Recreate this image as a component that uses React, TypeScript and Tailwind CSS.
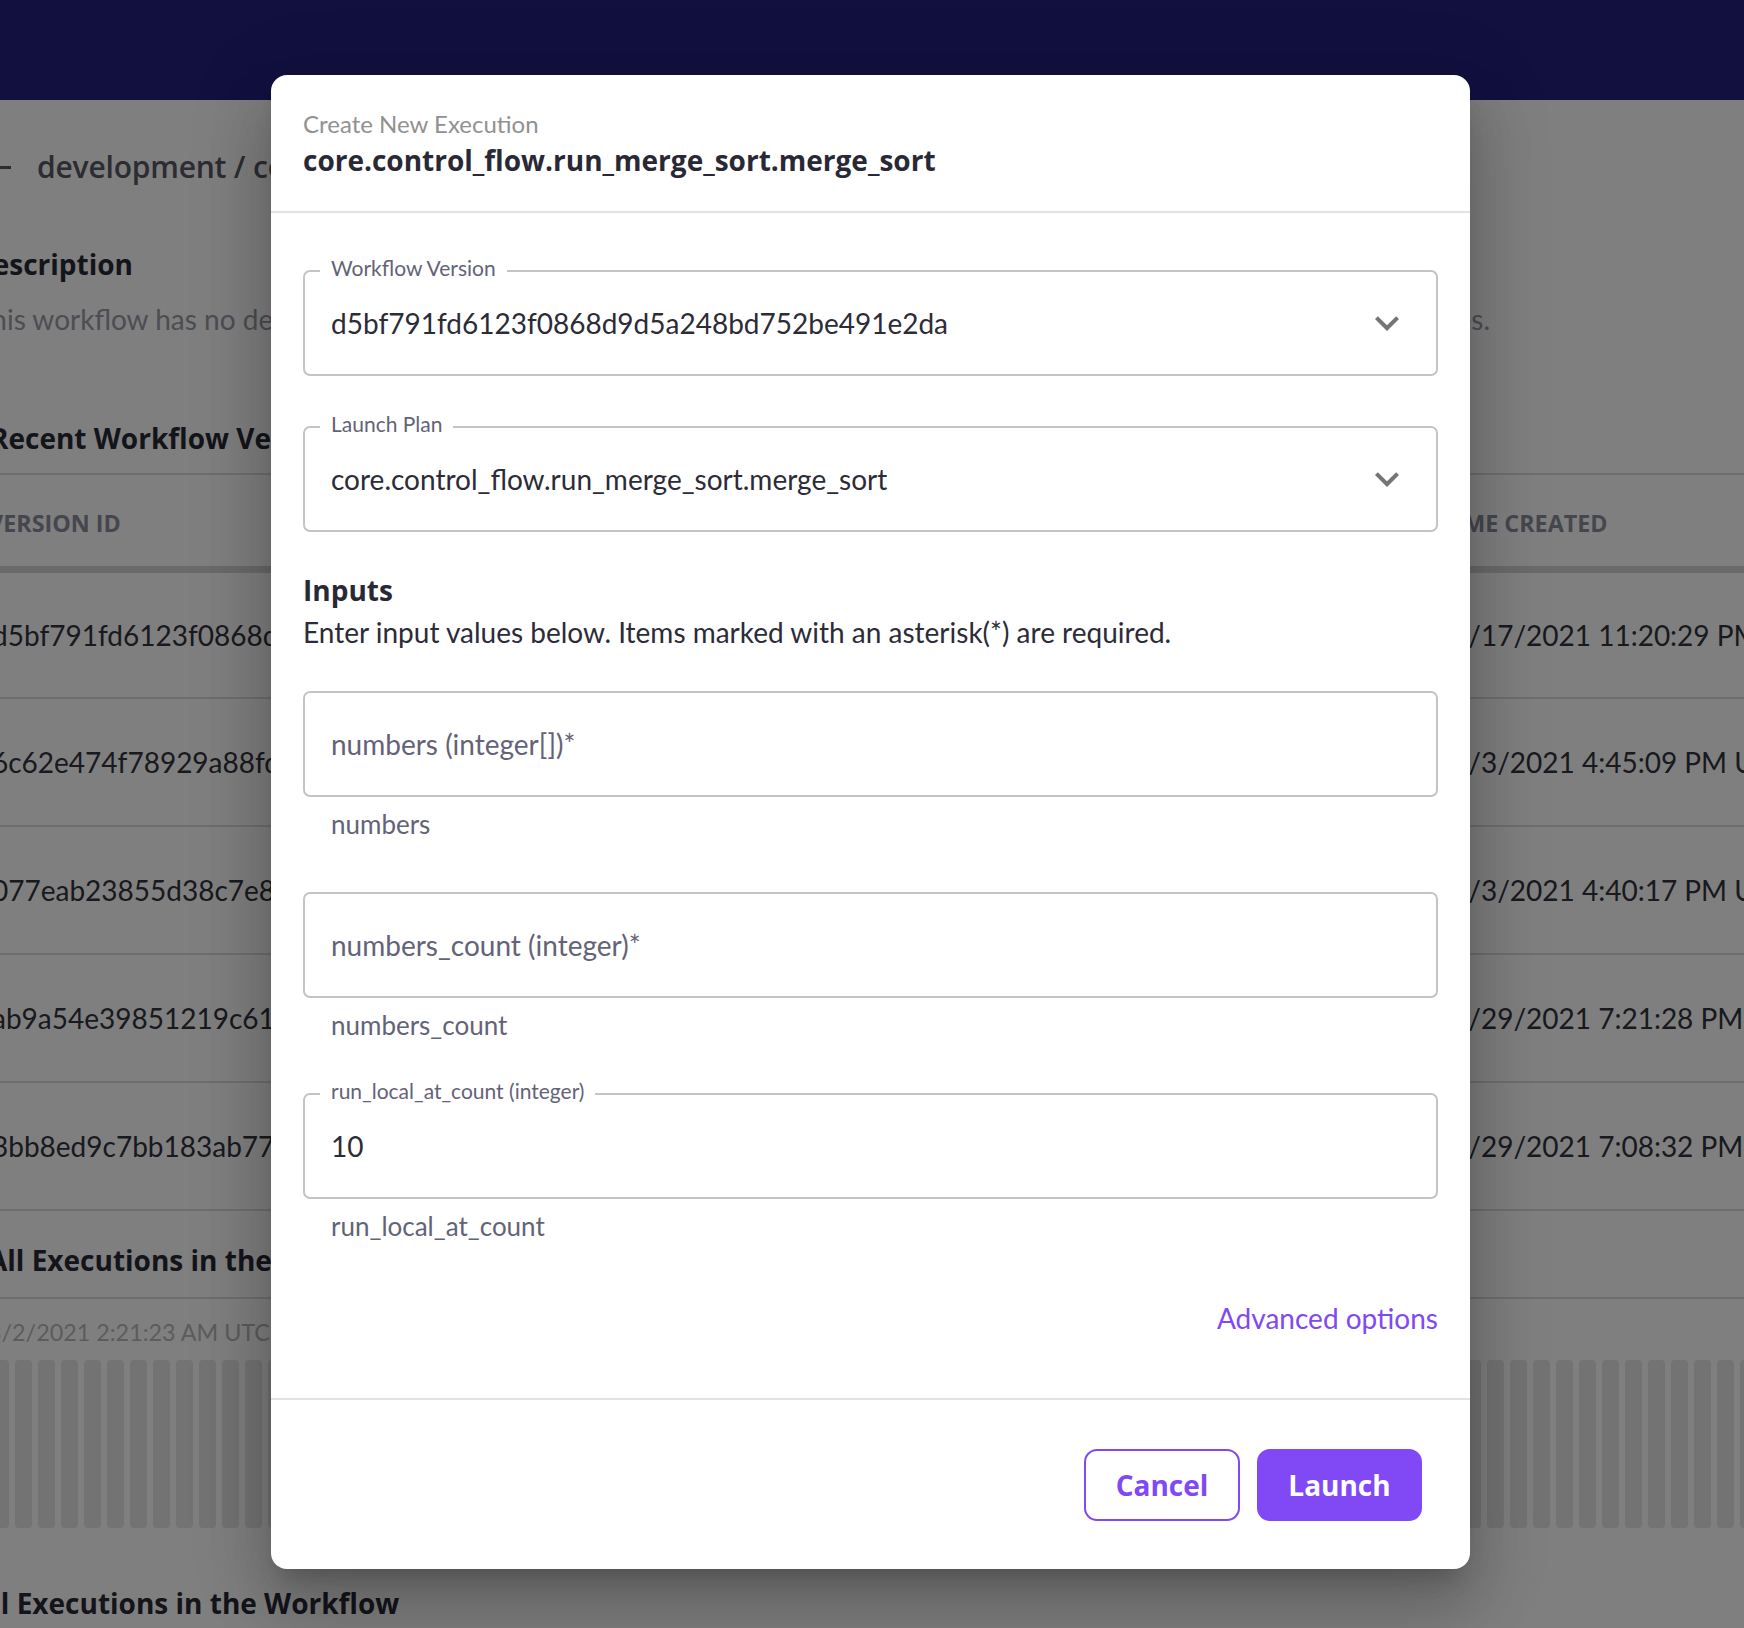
import React from 'react'

const versions = [
  { id: 'd5bf791fd6123f0868d9d5a248bd752be491e2da', created: '3/17/2021 11:20:29 PM UTC' },
  { id: '6c62e474f78929a88fd0e3b1a7c52d9f04e8a2b1', created: '3/3/2021 4:45:09 PM UTC' },
  { id: '077eab23855d38c7e81f4a0c9b2d6e53a17f8c40', created: '3/3/2021 4:40:17 PM UTC' },
  { id: 'ab9a54e39851219c61d07f3e2a8b4c95e6f1d203', created: '1/29/2021 7:21:28 PM UTC' },
  { id: '3bb8ed9c7bb183ab77e52c0d9f1a4b68c3e7d920', created: '1/29/2021 7:08:32 PM UTC' },
]

const bars = Array.from({ length: 78 }, (_, i) => i)

function ExpandMore() {
  return (
    <svg viewBox="0 0 24 24" className="w-[48px] h-[48px] shrink-0" fill="#757575">
      <path d="M16.59 8.59L12 13.17 7.41 8.59 6 10l6 6 6-6z" />
    </svg>
  )
}

interface FieldProps {
  label?: string
  value?: string
  placeholder?: string
  select?: boolean
}

function Field({ label, value, placeholder, select }: FieldProps) {
  return (
    <div className="relative h-[106px] border-2 border-[#c4c4c4] rounded-[7px] flex items-center justify-between pl-[26px] pr-[25px]">
      {label && (
        <span className="absolute left-[15px] top-[-4px] -translate-y-1/2 bg-white px-[11px] text-[21px] leading-[24px] text-[#636378]">
          {label}
        </span>
      )}
      {value ? (
        <span className="text-[28px] leading-[32px] text-[#2c2c38]">{value}</span>
      ) : (
        <span className="text-[28px] leading-[32px] text-[#636378]">{placeholder}</span>
      )}
      {select && <ExpandMore />}
    </div>
  )
}

function Helper({ text }: { text: string }) {
  return (
    <p className="mt-[12px] pl-[28px] text-[26px] leading-[30px] text-[#636378]">{text}</p>
  )
}

export default function App() {
  return (
    <div className="relative w-[1744px] h-[1628px] overflow-hidden bg-white font-['Lato',sans-serif] whitespace-nowrap">
      {/* page behind the dialog */}
      <div className="h-[100px] bg-[#24207e]" />

      <div className="h-[134px] flex items-center">
        <div className="w-[11px] h-[3px] bg-[#585864]" />
        <span className="ml-[26px] font-['Open_Sans',sans-serif] font-semibold text-[30px] leading-[36px] text-[#585864] tracking-[-0.2px]">
          development / core.control_flow.run_merge_sort.merge_sort
        </span>
      </div>

      <div className="mt-[14px] flex">
        <div className="ml-[-28px]">
          <h2 className="h-[32px] font-['Open_Sans',sans-serif] font-bold text-[28px] leading-[32px] text-[#292936]">
            Description
          </h2>
          <p className="mt-[23px] ml-[3px] text-[28px] leading-[32px] text-[#9a9aa6]">
            This workflow has no description.
          </p>
        </div>
        <div className="ml-auto mr-[254px] w-max">
          <h2 className="h-[32px] font-['Open_Sans',sans-serif] font-bold text-[28px] leading-[32px] text-[#292936]">
            Schedules
          </h2>
          <p className="mt-[23px] text-[28px] leading-[32px] text-[#9a9aa6]">
            This workflow has no schedules.
          </p>
        </div>
      </div>

      <h2 className="mt-[87px] ml-[-10px] h-[32px] font-['Open_Sans',sans-serif] font-bold text-[28px] leading-[32px] text-[#292936]">
        Recent Workflow Versions
      </h2>
      <div className="mt-[19px] h-[2px] bg-[#dcdcdc]" />
      <div className="h-[91px] pt-[4px] flex items-center font-['Open_Sans',sans-serif] font-bold text-[23.33px] leading-[28px] text-[#8c8c9e]">
        <div className="w-[1442px] shrink-0">
          <span className="block ml-[-12px]">VERSION ID</span>
        </div>
        <span>TIME CREATED</span>
      </div>
      <div className="h-[7px] bg-[#d4d4d4]" />
      {versions.map((v, i) => (
        <div
          key={v.id}
          className={`${i === 0 ? 'h-[126px]' : 'h-[128px]'} flex items-center border-b-2 border-[#dcdcdc] text-[28px] leading-[32px] text-[#333340]`}
        >
          <div className="w-[1452px] shrink-0">
            <span className="block ml-[-8px]">{v.id}</span>
          </div>
          <span>{v.created}</span>
        </div>
      ))}

      <h2 className="mt-[33px] ml-[-12px] h-[32px] font-['Open_Sans',sans-serif] font-bold text-[28px] leading-[32px] text-[#292936]">
        All Executions in the Workflow
      </h2>
      <div className="mt-[21px] h-[2px] bg-[#dcdcdc]" />
      <p className="mt-[19px] ml-[-12px] text-[23.33px] leading-[28px] text-[#b8b8b8]">3/2/2021 2:21:23 AM UTC</p>
      <div className="mt-[14px] ml-[-8px] h-[168px] flex gap-[6px]">
        {bars.map((b) => (
          <div key={b} className="w-[17px] h-full shrink-0 rounded-[4px] bg-[#e6e6e6]" />
        ))}
      </div>
      <h2 className="mt-[59px] ml-[-27px] h-[32px] font-['Open_Sans',sans-serif] font-bold text-[28px] leading-[32px] text-[#292936]">
        All Executions in the Workflow
      </h2>

      {/* dialog */}
      <div className="absolute inset-0 bg-black/50 flex justify-center items-start pt-[75px] pr-[3px]">
        <div className="w-[1199px] bg-white rounded-[16px] shadow-[0_18px_25px_-12px_rgba(0,0,0,0.2),0_40px_63px_5px_rgba(0,0,0,0.14),0_15px_77px_13px_rgba(0,0,0,0.12)]">
          <div className="px-[32px] pt-[35px] pb-[35px] border-b-2 border-[#e2e2e2]">
            <p className="text-[24px] leading-[28px] text-[#919191]">Create New Execution</p>
            <h1 className="mt-[6px] font-['Open_Sans',sans-serif] font-bold text-[28px] leading-[32px] text-[#292936]">
              core.control_flow.run_merge_sort.merge_sort
            </h1>
          </div>

          <div className="px-[32px] pt-[57px] pb-[64px]">
            <Field label="Workflow Version" value="d5bf791fd6123f0868d9d5a248bd752be491e2da" select />
            <div className="mt-[50px]">
              <Field label="Launch Plan" value="core.control_flow.run_merge_sort.merge_sort" select />
            </div>

            <h2 className="mt-[42px] h-[32px] font-['Open_Sans',sans-serif] font-bold text-[28px] leading-[32px] text-[#292936]">
              Inputs
            </h2>
            <p className="mt-[10px] text-[28px] leading-[32px] text-[#2c2c38]">
              Enter input values below. Items marked with an asterisk(*) are required.
            </p>

            <div className="mt-[43px]">
              <Field placeholder="numbers (integer[])*" />
              <Helper text="numbers" />
            </div>
            <div className="mt-[53px]">
              <Field placeholder="numbers_count (integer)*" />
              <Helper text="numbers_count" />
            </div>
            <div className="mt-[53px]">
              <Field label="run_local_at_count (integer)" value="10" />
              <Helper text="run_local_at_count" />
            </div>

            <div className="mt-[61px] flex justify-end">
              <span className="text-[28px] leading-[32px] text-[#8149f5]">Advanced options</span>
            </div>
          </div>

          <div className="border-t-2 border-[#e2e2e2] pt-[49px] pb-[48px] pr-[48px] flex justify-end gap-[17px]">
            <button className="w-[156px] h-[72px] rounded-[13px] border-2 border-[#8149f5] bg-white font-['Open_Sans',sans-serif] font-bold text-[28px] text-[#8149f5]">
              Cancel
            </button>
            <button className="w-[165px] h-[72px] rounded-[13px] bg-[#8149f5] font-['Open_Sans',sans-serif] font-bold text-[28px] text-white">
              Launch
            </button>
          </div>
        </div>
      </div>
    </div>
  )
}
